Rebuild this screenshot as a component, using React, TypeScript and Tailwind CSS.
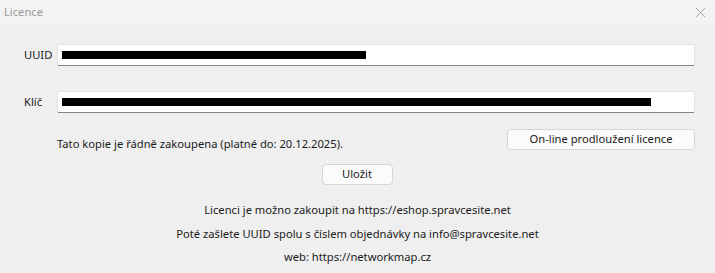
import { X } from "lucide-react";

const font = { fontFamily: '"Noto Sans", "Open Sans", sans-serif' };

const Field = ({ label, bar }: { label: string; bar: string }) => (
  <div className="flex items-center">
    <span className="w-[57px] pl-[24px] text-[11.2px] text-[#1a1a1a]">{label}</span>
    <div className="h-[22px] w-[638px] bg-white border border-[#e3e3e3] border-b-[#858585] rounded-[2px] flex items-center px-[4px]">
      <div className={`h-[8px] bg-black ${bar}`} />
    </div>
  </div>
);

export default function App() {
  return (
    <div className="w-[715px] h-[273px] bg-[#efefef] flex flex-col text-[#1a1a1a]" style={font}>
      <div className="h-[25px] bg-[#f3f3f3] flex items-center justify-between pl-[4px] pr-[6px]">
        <span className="text-[11.2px] text-[#9a9a9a]">Licence</span>
        <X className="w-[17px] h-[17px] text-[#8a8a8a]" strokeWidth={1} />
      </div>

      <div className="flex flex-col pt-[19px]">
        <Field label="UUID" bar="w-[304px]" />
        <div className="h-[25px]" />
        <Field label="Klíč" bar="w-[589px]" />

        <div className="flex items-start justify-between pl-[57px] pr-[20px] mt-[16px]">
          <span className="text-[11.2px] leading-[17px] mt-[6px]">Tato kopie je řádně zakoupena (platné do: 20.12.2025).</span>
          <button className="h-[21px] w-[188px] bg-[#fbfbfb] border border-[#d6d6d6] rounded-[4px] text-[11.2px]">
            On-line prodloužení licence
          </button>
        </div>

        <div className="flex justify-center mt-[12px]">
          <button className="h-[21px] w-[71px] bg-[#fbfbfb] border border-[#d6d6d6] rounded-[4px] text-[11.2px] -ml-[1px]">
            Uložit
          </button>
        </div>

        <div className="flex flex-col items-center text-[11.2px] mt-[16px] gap-[6.5px] leading-[17px]">
          <span>Licenci je možno zakoupit na https://eshop.spravcesite.net</span>
          <span>Poté zašlete UUID spolu s číslem objednávky na info@spravcesite.net</span>
          <span>web: https://networkmap.cz</span>
        </div>
      </div>
    </div>
  );
}
